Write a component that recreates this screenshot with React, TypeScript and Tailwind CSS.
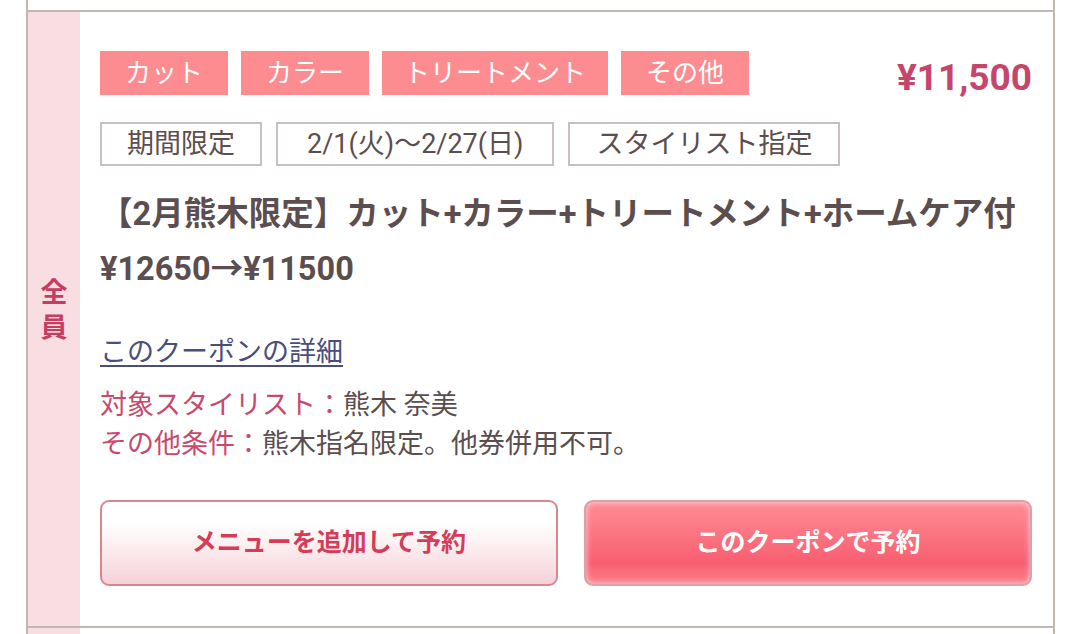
import React from "react";

const MENU_TAGS = [
  { label: "カット", pad: "px-[25px]" },
  { label: "カラー", pad: "px-[25px]" },
  { label: "トリートメント", pad: "px-[22px]" },
  { label: "その他", pad: "px-[25px]" },
];
const INFO_TAGS = [
  { label: "期間限定", pad: "px-[25px]" },
  { label: "2/1(火)～2/27(日)", pad: "px-[29px]" },
  { label: "スタイリスト指定", pad: "px-[26px]" },
];

export default function App() {
  return (
    <div className="min-h-screen w-[1071px] bg-white font-['Roboto','Noto_Sans_CJK_JP',sans-serif] text-[#5c4e4e]">
      <div className="ml-[26px] w-[1029px] h-[634px] border-x-2 border-[#c0b9b1] flex flex-col">
        <div className="h-[10px] shrink-0" />

        {/* Coupon card */}
        <div className="flex border-t-2 border-[#c0b9b1] h-[616px] shrink-0">
          <div className="w-[52px] shrink-0 bg-[#f8dde3] flex flex-col items-center justify-center gap-[8px] pb-[16px] text-[27px] font-bold leading-none text-[#c63d63]">
            <span>全</span>
            <span>員</span>
          </div>

          <div className="flex-1 pl-[20px] pr-[22px] pt-[39px]">
            <div className="flex items-start justify-between">
              <div className="flex gap-[13px]">
                {MENU_TAGS.map((t) => (
                  <span
                    key={t.label}
                    className={`h-[44px] ${t.pad} flex items-center bg-[#fd8c91] text-white text-[26px] leading-none`}
                  >
                    {t.label}
                  </span>
                ))}
              </div>
              <span className="mt-[8px] text-[37px] font-bold leading-none text-[#c6466b] font-[Roboto,sans-serif]">
                ¥11,500
              </span>
            </div>

            <div className="flex gap-[14px] mt-[26px]">
              {INFO_TAGS.map((t) => (
                <span
                  key={t.label}
                  className={`h-[44px] ${t.pad} flex items-center border-2 border-[#c8c0bf] text-[27px] leading-none`}
                >
                  {t.label}
                </span>
              ))}
            </div>

            <p className="mt-[21px] text-[32.5px] font-bold leading-[55px]">
              【2月熊木限定】カット+カラー+トリートメント+ホームケア付 ¥12650→¥11500
            </p>

            <a
              href="#"
              className="block mt-[38px] w-fit text-[27px] leading-[34px] text-[#4a4d7d] underline underline-offset-[4px] decoration-[2px]"
            >
              このクーポンの詳細
            </a>

            <div className="mt-[17px] text-[27px] leading-[39px]">
              <p>
                <span className="text-[#c8496b]">対象スタイリスト：</span>熊木 奈美
              </p>
              <p>
                <span className="text-[#c8496b]">その他条件：</span>熊木指名限定。他券併用不可。
              </p>
            </div>

            <div className="flex gap-[26px] mt-[36px]">
              <button className="w-[458px] h-[86px] rounded-[9px] border-2 border-[#d98690] bg-gradient-to-b from-white from-[25%] to-[#f6d2d9] text-[25px] font-bold text-[#d43d58]">
                メニューを追加して予約
              </button>
              <button className="w-[448px] h-[86px] rounded-[9px] border-2 border-[#dca1a8] bg-gradient-to-b from-[#ff8b93] via-[#f85e71] via-[75%] to-[#fb8089] shadow-[inset_0_0_6px_rgba(255,255,255,0.7)] text-[25px] font-bold text-white">
                このクーポンで予約
              </button>
            </div>
          </div>
        </div>

        {/* Next card */}
        <div className="flex flex-1 border-t-2 border-[#c0b9b1]">
          <div className="w-[52px] bg-[#f8dde3]" />
        </div>
      </div>
    </div>
  );
}
